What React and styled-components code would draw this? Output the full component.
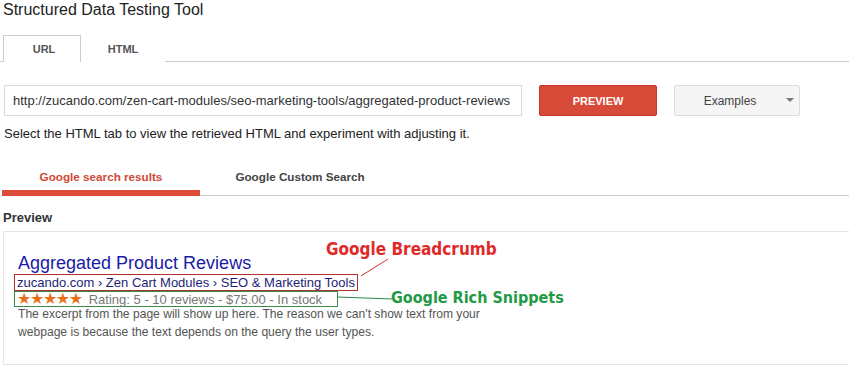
import React from 'react'
import styled, { createGlobalStyle } from 'styled-components'

const GlobalStyle = createGlobalStyle`
  html, body {
    margin: 0;
    padding: 0;
    background: #fff;
    overflow: hidden;
  }
  body {
    font-family: 'Liberation Sans', Arial, sans-serif;
    color: #222;
  }
`;

const Page = styled.div`
  width: 849px;
  height: 367px;
  padding-left: 3px;
  box-sizing: border-box;
  position: relative;
`;

const Title = styled.h1`
  margin: 0;
  font-size: 16px;
  font-weight: 400;
  line-height: 19px;
  color: #222;
`;

const TabBar = styled.div`
  display: flex;
  margin-top: 16px;
  margin-left: -3px;
  padding-left: 3px;
  border-bottom: 1px solid #ccc;
  height: 26px;
`;

const Tab = styled.div`
  width: ${p => p.$w}px;
  box-sizing: border-box;
  display: flex;
  align-items: center;
  justify-content: center;
  font-size: 11px;
  font-weight: 700;
  color: #555;
  background: #fff;
  border: 1px solid ${p => (p.$active ? '#ccc' : 'transparent')};
  border-bottom: none;
  height: 27px;
  padding-left: ${p => (p.$active ? 4 : 0)}px;
`;

const InputRow = styled.div`
  display: flex;
  align-items: center;
  margin-top: 23px;
  gap: 17px;
`;

const UrlInput = styled.div`
  width: 518px;
  height: 31px;
  box-sizing: border-box;
  border: 1px solid #d9d9d9;
  padding-left: 8px;
  display: flex;
  align-items: center;
  font-size: 13px;
  color: #333;
  margin-left: 1px;
`;

const PreviewButton = styled.div`
  width: 118px;
  height: 31px;
  box-sizing: border-box;
  background: #d84a38;
  border: 1px solid #c53727;
  border-radius: 2px;
  color: #fff;
  font-size: 11px;
  font-weight: 700;
  display: flex;
  align-items: center;
  justify-content: center;
`;

const ExamplesButton = styled.div`
  width: 126px;
  height: 31px;
  box-sizing: border-box;
  background: #f5f5f5;
  border: 1px solid #dcdcdc;
  border-radius: 2px;
  color: #444;
  font-size: 12px;
  display: flex;
  align-items: center;
  justify-content: center;
  position: relative;
  padding-right: 14px;
`;

const Caret = styled.span`
  position: absolute;
  right: 5px;
  top: 12px;
  width: 0;
  height: 0;
  border-left: 4px solid transparent;
  border-right: 4px solid transparent;
  border-top: 4px solid #777;
`;

const Help = styled.p`
  margin: 10px 0 0 1px;
  font-size: 13px;
  color: #222;
`;

const ResultTabs = styled.div`
  display: flex;
  margin-top: 22px;
  margin-left: -1px;
  border-bottom: 1px solid #ccc;
  width: 850px;
`;

const ResultTab = styled.div`
  width: ${p => p.$w}px;
  height: 33px;
  box-sizing: border-box;
  display: flex;
  align-items: flex-start;
  justify-content: center;
  padding-top: 7px;
  font-size: 11.7px;
  font-weight: 700;
  color: ${p => (p.$active ? '#d14836' : '#444')};
  border-bottom: 6px solid ${p => (p.$active ? '#dd4b39' : 'transparent')};
  margin-bottom: -1px;
`;

const SectionLabel = styled.h2`
  margin: 14px 0 0 0;
  font-size: 13px;
  font-weight: 700;
  color: #333;
`;

const Card = styled.div`
  margin-top: 6px;
  width: 870px;
  height: 134px;
  box-sizing: border-box;
  border: 1px solid #e5e5e5;
  padding: 21px 0 0 10px;
`;

const ResultTitle = styled.div`
  font-size: 18px;
  line-height: 20px;
  color: #1a1aa6;
  padding-left: 4px;
`;

const Breadcrumb = styled.div`
  display: inline-block;
  border: 1px solid #b03030;
  font-size: 13px;
  line-height: 15px;
  color: #1e1e78;
  padding: 0 2px;
  margin-top: 1px;
`;

const RichLine = styled.div`
  display: flex;
  align-items: center;
  width: 324px;
  height: 16px;
  box-sizing: border-box;
  border: 1px solid #3a8a4a;
  font-size: 13px;
  color: #777;
  padding: 0 2px;
  margin-top: 0;
  white-space: nowrap;
`;

const Stars = styled.span`
  color: #e7711b;
  font-family: 'DejaVu Sans', sans-serif;
  font-size: 16px;
  line-height: 14px;
  letter-spacing: -1.4px;
  margin-right: 7px;
`;

const Excerpt = styled.p`
  margin: -2px 0 0 0;
  padding-left: 4px;
  font-size: 12.1px;
  line-height: 18px;
  color: #545454;
  width: 500px;
`;

const Note = styled.div`
  position: absolute;
  left: ${p => p.$x}px;
  top: ${p => p.$y}px;
  font-family: 'Comic Sans MS', 'DejaVu Sans Condensed', 'DejaVu Sans', sans-serif;
  font-size: ${p => p.$size}px;
  font-weight: 700;
  color: ${p => p.$color};
  white-space: nowrap;
`;

const Pointers = styled.svg`
  position: absolute;
  left: 0;
  top: 0;
  pointer-events: none;
`;

export default function App() {
  return (
    <>
      <GlobalStyle />
      <Page>
        <Title>Structured Data Testing Tool</Title>
        <TabBar>
          <Tab $w={78} $active>URL</Tab>
          <Tab $w={84}>HTML</Tab>
        </TabBar>
        <InputRow>
          <UrlInput>http://zucando.com/zen-cart-modules/seo-marketing-tools/aggregated-product-reviews</UrlInput>
          <PreviewButton>PREVIEW</PreviewButton>
          <ExamplesButton>
            Examples
            <Caret />
          </ExamplesButton>
        </InputRow>
        <Help>Select the HTML tab to view the retrieved HTML and experiment with adjusting it.</Help>
        <ResultTabs>
          <ResultTab $w={198} $active>Google search results</ResultTab>
          <ResultTab $w={200}>Google Custom Search</ResultTab>
        </ResultTabs>
        <SectionLabel>Preview</SectionLabel>
        <Card>
          <ResultTitle>Aggregated Product Reviews</ResultTitle>
          <Breadcrumb>zucando.com › Zen Cart Modules › SEO &amp; Marketing Tools</Breadcrumb>
          <RichLine>
            <Stars>★★★★★</Stars>Rating: 5 - 10 reviews - $75.00 - In stock
          </RichLine>
          <Excerpt>
            The excerpt from the page will show up here. The reason we can't show text from your
            webpage is because the text depends on the query the user types.
          </Excerpt>
        </Card>
        <Note $x={326} $y={239} $size={17} $color="#e02a2a">Google Breadcrumb</Note>
        <Note $x={391} $y={288} $size={16} $color="#1f9a45">Google Rich Snippets</Note>
        <Pointers width="849" height="367">
          <line x1="361" y1="276" x2="388" y2="259" stroke="#d03030" strokeWidth="1" />
          <line x1="338" y1="297" x2="392" y2="299" stroke="#2a8a4a" strokeWidth="1" />
        </Pointers>
      </Page>
    </>
  )
}
